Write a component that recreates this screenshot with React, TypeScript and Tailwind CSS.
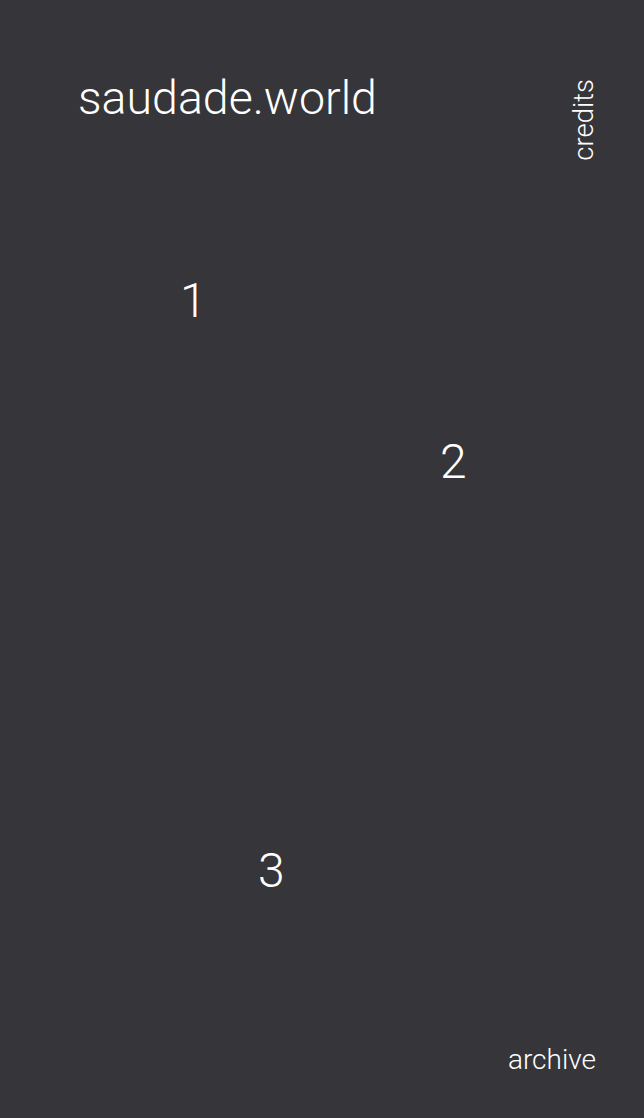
import React from 'react';

const nodes = [
  { label: '1', className: 'left-[180px] top-[277px]' },
  { label: '2', className: 'left-[440px] top-[438px]' },
  { label: '3', className: 'left-[258px] top-[847px]' },
];

export default function App() {
  return (
    <div className="relative flex h-[1118px] w-full flex-col justify-between overflow-hidden bg-[#363539] text-white font-['Roboto',sans-serif]">
      <header className="flex items-start justify-between pl-[78px] pr-[47px] pt-[75px]">
        <h1 className="text-[46.5px] font-light leading-none tracking-normal">saudade.world</h1>
        <a className="mt-[4px] text-[27.5px] font-light leading-none [writing-mode:vertical-rl] rotate-180">credits</a>
      </header>

      {nodes.map((n) => (
        <span key={n.label} className={`absolute text-[48px] font-light leading-none ${n.className}`}>
          {n.label}
        </span>
      ))}

      <footer className="flex justify-end pb-[44px] pr-[48px]">
        <a className="text-[28px] font-light leading-none">archive</a>
      </footer>
    </div>
  );
}
